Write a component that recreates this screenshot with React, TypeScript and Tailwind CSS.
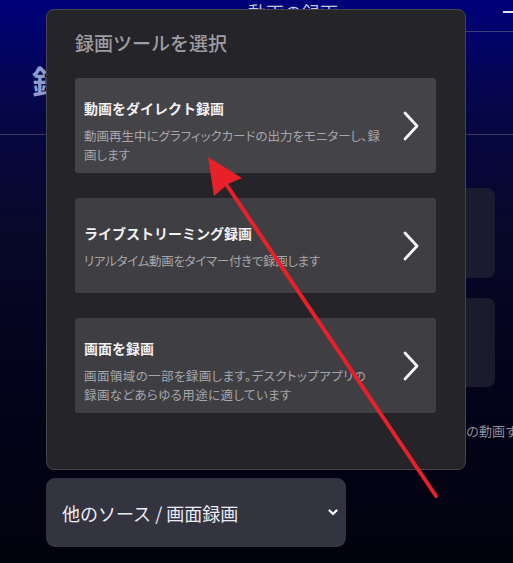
import React from "react";

const font = { fontFamily: '"Noto Sans CJK JP", "Noto Sans", sans-serif' };

function Chevron() {
  return (
    <svg width="16" height="30" viewBox="0 0 16 30" className="shrink-0">
      <polyline points="2,2 14,15 2,28" fill="none" stroke="#f4f4f4" strokeWidth="2.8" strokeLinecap="round" strokeLinejoin="round" />
    </svg>
  );
}

function ToolCard({
  title,
  lines,
  bg,
  pt,
  track,
}: {
  title: string;
  lines: string[];
  bg: string;
  pt: string;
  track: string;
}) {
  return (
    <div className={`h-[95px] rounded-[3px] flex items-center pl-[9px] pr-[17px] ${bg}`}>
      <div className={`flex-1 h-full flex flex-col ${pt}`}>
        <div className="text-[14px] leading-[20px] font-bold text-[#f2f2f2]">{title}</div>
        <div className={`mt-[8px] text-[12.5px] leading-[19px] text-[#a6a6ab] whitespace-nowrap [font-feature-settings:'palt'] ${track}`}>
          {lines.map((l, i) => (
            <div key={i}>{l}</div>
          ))}
        </div>
      </div>
      <Chevron />
    </div>
  );
}

export default function App() {
  return (
    <div
      className="relative w-[513px] h-[563px] overflow-hidden bg-[linear-gradient(180deg,#00007a_0%,#06064a_18%,#08082a_40%,#03031a_70%,#02020e_100%)]"
      style={font}
    >
      {/* background page */}
      <div className="flex flex-col">
        <div className="h-[31px] flex items-start relative">
          <div className="ml-[248px] mt-[2px] text-[18px] leading-[20px] text-[#c9c9dc]">動画の録画</div>
          <div className="ml-auto mt-[11px] w-[10px] h-[2px] bg-[#e6e6f0]" />
        </div>
        <div className="ml-[300px] h-px bg-[#3e3e78]" />
        <div className="h-[103px] border-b border-[#3a3a5e] pl-[32px] pt-[28px]">
          <div className="text-[32px] leading-[40px] font-bold text-[#8f9ccc]">録画ツール</div>
        </div>
        <div className="flex flex-col items-end pr-[18px] pt-[53px] gap-[20px]">
          <div className="w-[200px] h-[90px] rounded-[8px] bg-[#1a1b2e]" />
          <div className="w-[200px] h-[89px] rounded-[8px] bg-[#1a1b2d]" />
        </div>
        <div className="ml-[388px] mt-[36px] text-[13px] leading-[16px] whitespace-nowrap text-[#8e8e9c]">
          ライブラリ内の動画すべて
        </div>
        <div className="ml-[46px] mt-[39px] w-[300px] h-[69px] rounded-[9px] bg-[#33343f] flex items-center pl-[16px] pr-[8px]">
          <div className="flex-1 text-[18px] leading-[24px] text-[#ececf4]">他のソース / 画面録画</div>
          <svg width="10" height="7" viewBox="0 0 10 7">
            <polyline points="1.5,1.5 5,5 8.5,1.5" fill="none" stroke="#ffffff" strokeWidth="2.2" strokeLinecap="round" strokeLinejoin="round" />
          </svg>
        </div>
      </div>

      {/* modal */}
      <div className="absolute left-[46px] top-[9px] w-[420px] h-[461px] rounded-[8px] border border-[#45444b] bg-[#252429] pl-[28px] pr-[29px] pt-[20px]">
        <div className="text-[19px] leading-[26px] font-medium text-[#9d9da2]">録画ツールを選択</div>
        <div className="mt-[22px] flex flex-col gap-[25px]">
          <ToolCard
            bg="bg-[#444348]"
            pt="pt-[20px]"
            track="tracking-normal"
            title="動画をダイレクト録画"
            lines={["動画再生中にグラフィックカードの出力をモニターし、録", "画します"]}
          />
          <ToolCard
            bg="bg-[#3f3e43]"
            pt="pt-[25px]"
            track="tracking-[-0.3px]"
            title="ライブストリーミング録画"
            lines={["リアルタイム動画をタイマー付きで録画します"]}
          />
          <ToolCard
            bg="bg-[#3f3e43]"
            pt="pt-[20px]"
            track="tracking-[0.4px]"
            title="画面を録画"
            lines={["画面領域の一部を録画します。デスクトップアプリの", "録画などあらゆる用途に適しています"]}
          />
        </div>
      </div>

      {/* red arrow */}
      <svg className="absolute left-0 top-0 pointer-events-none" width="513" height="563" viewBox="0 0 513 563">
        <line x1="436" y1="496" x2="226" y2="184" stroke="#e8202a" strokeWidth="4" strokeLinecap="round" />
        <polygon points="208,157 242,178 228,184 214,196" fill="#e8202a" />
      </svg>
    </div>
  );
}
